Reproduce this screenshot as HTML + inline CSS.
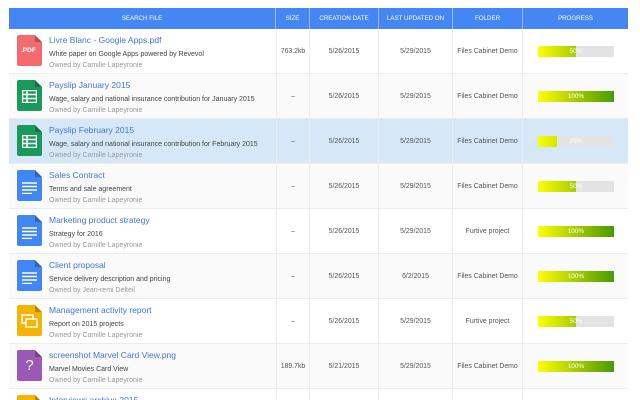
<!DOCTYPE html>
<html style="width:640px;height:400px;overflow:hidden"><head><meta charset="utf-8"><style>
*{margin:0;padding:0;box-sizing:border-box}
body{width:640px;height:400px;overflow:hidden;background:#fff;font-family:"Liberation Sans",Arial,sans-serif;position:relative}
.hdr{position:absolute;left:9px;top:8px;width:619px;height:21px;background:#4486f4}
.hdr div{position:absolute;top:0;height:21px;line-height:21px;color:#fff;font-size:6.2px;text-align:center;border-right:1px solid #9cbcf4}
.row{position:absolute;left:9px;width:619px;height:45px;border-bottom:1px solid #ececec;overflow:hidden}
.row.g{background:#fafafa}.row.h{background:#d6e8f7}
.c{position:absolute;top:0;height:45px;line-height:45px;text-align:center;font-size:6.9px;color:#555;border-right:1px solid #ececec}
.ic{position:absolute;left:8px;top:6px;width:25px;height:31px;border-radius:2px}
.ic:after{content:"";position:absolute;right:0;top:0;border-style:solid;border-width:0 7px 7px 0;border-color:transparent #fff rgba(0,0,0,.25) transparent}
.row.g .ic:after{border-right-color:#fafafa}.row.h .ic:after{border-right-color:#d6e8f7}
.t{position:absolute;left:40px;top:6px;font-size:8.5px;color:#3b78d8;white-space:nowrap}
.d{position:absolute;left:40px;top:22px;font-size:7px;color:#444;white-space:nowrap}
.o{position:absolute;left:40px;top:33px;font-size:7px;color:#9a9a9a;white-space:nowrap}
.bar{position:absolute;left:529px;top:17px;width:76px;height:11px;background:#e3e3e3;overflow:hidden}
.bar i{position:absolute;left:0;top:0;height:11px;background:linear-gradient(90deg,#ffff00,#4a9a00);background-size:76px 11px}
.bar span{position:absolute;left:0;width:76px;top:0;line-height:11px;text-align:center;color:#fff;font-size:6.5px}
</style></head><body>
<div class="hdr">
<div style="left:0;width:267px">SEARCH FILE</div>
<div style="left:267px;width:34px">SIZE</div>
<div style="left:301px;width:69px">CREATION DATE</div>
<div style="left:370px;width:74px">LAST UPDATED ON</div>
<div style="left:444px;width:70px">FOLDER</div>
<div style="left:514px;width:105px;border:none">PROGRESS</div>
</div>

<div class="row" style="top:29px">
<div class="ic" style="background:#f36b6f"><span style="position:absolute;left:4px;top:12px;color:#fff;font-size:6.5px;font-weight:bold">.PDF</span></div>
<div class="t">Livre Blanc - Google Apps.pdf</div><div class="d">White paper on Google Apps powered by Revevol</div><div class="o">Owned by Camille Lapeyronie</div>
<div class="c" style="left:267px;width:34px;border-left:1px solid #ececec">763.2kb</div><div class="c" style="left:301px;width:69px">5/26/2015</div><div class="c" style="left:370px;width:74px">5/29/2015</div><div class="c" style="left:444px;width:70px">Files Cabinet Demo</div>
<div class="bar"><i style="width:38px"></i><span>50%</span></div></div>

<div class="row g" style="top:74px">
<div class="ic" style="background:#1a9a5a"><svg style="position:absolute;left:5px;top:10px" width="15" height="13"><rect x="0.5" y="0.5" width="14" height="12" fill="none" stroke="#fff" stroke-width="1.5"/><path d="M0 4.5H15M0 8.5H15M5 0V13" stroke="#fff" stroke-width="1.5"/></svg></div>
<div class="t">Payslip January 2015</div><div class="d">Wage, salary and national insurance contribution for January 2015</div><div class="o">Owned by Camille Lapeyronie</div>
<div class="c" style="left:267px;width:34px;border-left:1px solid #ececec">–</div><div class="c" style="left:301px;width:69px">5/26/2015</div><div class="c" style="left:370px;width:74px">5/29/2015</div><div class="c" style="left:444px;width:70px">Files Cabinet Demo</div>
<div class="bar"><i style="width:76px"></i><span>100%</span></div></div>

<div class="row h" style="top:119px">
<div class="ic" style="background:#1a9a5a"><svg style="position:absolute;left:5px;top:10px" width="15" height="13"><rect x="0.5" y="0.5" width="14" height="12" fill="none" stroke="#fff" stroke-width="1.5"/><path d="M0 4.5H15M0 8.5H15M5 0V13" stroke="#fff" stroke-width="1.5"/></svg></div>
<div class="t">Payslip February 2015</div><div class="d">Wage, salary and national insurance contribution for February 2015</div><div class="o">Owned by Camille Lapeyronie</div>
<div class="c" style="left:267px;width:34px;border-left:1px solid #ececec">–</div><div class="c" style="left:301px;width:69px">5/26/2015</div><div class="c" style="left:370px;width:74px">5/29/2015</div><div class="c" style="left:444px;width:70px">Files Cabinet Demo</div>
<div class="bar"><i style="width:19px"></i><span>25%</span></div></div>

<div class="row g" style="top:164px">
<div class="ic" style="background:#4285f4"><svg style="position:absolute;left:5px;top:12px" width="15" height="12"><path d="M0 1H15M0 4.5H15M0 8H15M0 11.5H10" stroke="#fff" stroke-width="1.4"/></svg></div>
<div class="t">Sales Contract</div><div class="d">Terms and sale agreement</div><div class="o">Owned by Camille Lapeyronie</div>
<div class="c" style="left:267px;width:34px;border-left:1px solid #ececec">–</div><div class="c" style="left:301px;width:69px">5/26/2015</div><div class="c" style="left:370px;width:74px">5/29/2015</div><div class="c" style="left:444px;width:70px">Files Cabinet Demo</div>
<div class="bar"><i style="width:38px"></i><span>50%</span></div></div>

<div class="row" style="top:209px">
<div class="ic" style="background:#4285f4"><svg style="position:absolute;left:5px;top:12px" width="15" height="12"><path d="M0 1H15M0 4.5H15M0 8H15M0 11.5H10" stroke="#fff" stroke-width="1.4"/></svg></div>
<div class="t">Marketing product strategy</div><div class="d">Strategy for 2016</div><div class="o">Owned by Camille Lapeyronie</div>
<div class="c" style="left:267px;width:34px;border-left:1px solid #ececec">–</div><div class="c" style="left:301px;width:69px">5/26/2015</div><div class="c" style="left:370px;width:74px">5/29/2015</div><div class="c" style="left:444px;width:70px">Furtive project</div>
<div class="bar"><i style="width:76px"></i><span>100%</span></div></div>

<div class="row g" style="top:254px">
<div class="ic" style="background:#4285f4"><svg style="position:absolute;left:5px;top:12px" width="15" height="12"><path d="M0 1H15M0 4.5H15M0 8H15M0 11.5H10" stroke="#fff" stroke-width="1.4"/></svg></div>
<div class="t">Client proposal</div><div class="d">Service delivery description and pricing</div><div class="o">Owned by Jean-remi Delteil</div>
<div class="c" style="left:267px;width:34px;border-left:1px solid #ececec">–</div><div class="c" style="left:301px;width:69px">5/26/2015</div><div class="c" style="left:370px;width:74px">6/2/2015</div><div class="c" style="left:444px;width:70px">Files Cabinet Demo</div>
<div class="bar"><i style="width:76px"></i><span>100%</span></div></div>

<div class="row" style="top:299px">
<div class="ic" style="background:#f5b400"><svg style="position:absolute;left:4px;top:9px" width="17" height="15"><rect x="1" y="1" width="11" height="8" fill="none" stroke="#fff" stroke-width="1.5"/><rect x="5" y="5" width="11" height="8" fill="#f5b400" stroke="#fff" stroke-width="1.5"/></svg></div>
<div class="t">Management activity report</div><div class="d">Report on 2015 projects</div><div class="o">Owned by Camille Lapeyronie</div>
<div class="c" style="left:267px;width:34px;border-left:1px solid #ececec">–</div><div class="c" style="left:301px;width:69px">5/26/2015</div><div class="c" style="left:370px;width:74px">5/29/2015</div><div class="c" style="left:444px;width:70px">Furtive project</div>
<div class="bar"><i style="width:38px"></i><span>50%</span></div></div>

<div class="row g" style="top:344px">
<div class="ic" style="background:#9b59b6"><span style="position:absolute;left:0;width:25px;text-align:center;top:7px;color:#fff;font-size:15px">?</span></div>
<div class="t">screenshot Marvel Card View.png</div><div class="d">Marvel Movies Card View</div><div class="o">Owned by Camille Lapeyronie</div>
<div class="c" style="left:267px;width:34px;border-left:1px solid #ececec">189.7kb</div><div class="c" style="left:301px;width:69px">5/21/2015</div><div class="c" style="left:370px;width:74px">5/29/2015</div><div class="c" style="left:444px;width:70px">Files Cabinet Demo</div>
<div class="bar"><i style="width:76px"></i><span>100%</span></div></div>

<div class="row" style="top:389px;height:11px;border-bottom:none">
<div class="ic" style="background:#f5b400"></div>
<div class="t">Interviews archive 2015</div>
<div class="c" style="left:267px;width:34px;height:11px;border-left:1px solid #ececec"></div><div class="c" style="left:301px;width:69px;height:11px"></div><div class="c" style="left:370px;width:74px;height:11px"></div><div class="c" style="left:444px;width:70px;height:11px"></div></div>
</body></html>
